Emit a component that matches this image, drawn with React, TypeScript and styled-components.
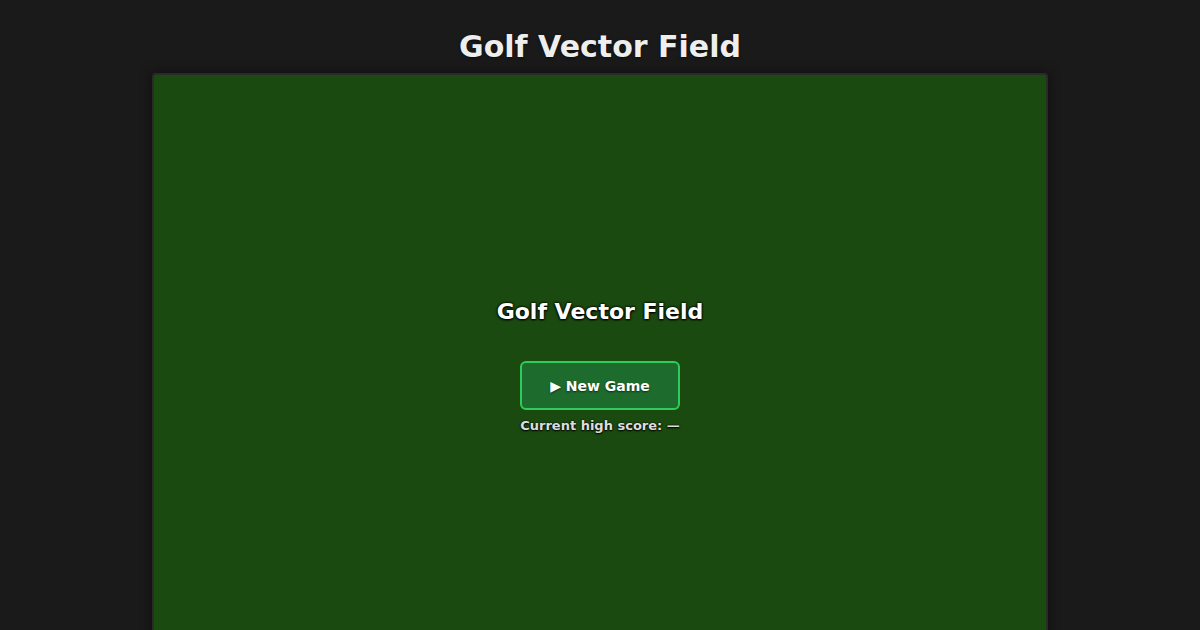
import React from 'react';
import styled, { createGlobalStyle } from 'styled-components';

const GlobalStyle = createGlobalStyle`
	html, body {
		margin: 0;
		padding: 0;
		background: #1a1a1a;
		font-family: "DejaVu Sans", sans-serif;
		color: #eee;
	}
`;

function App() {
	const [highScore] = React.useState<number | null>(null);

	return (
		<Page>
			<GlobalStyle />
			<Title>Golf Vector Field</Title>
			<Field>
				<Overlay>
					<OverlayTitle>Golf Vector Field</OverlayTitle>
					<StartBtn type="button">▶ New Game</StartBtn>
					<HighScore>Current high score: {highScore ?? '—'}</HighScore>
				</Overlay>
			</Field>
		</Page>
	);
}

const Page = styled.div`
	display: flex;
	flex-direction: column;
	align-items: center;
	padding-top: 29px;
`;

const Title = styled.h1`
	margin: 0 0 8px;
	font-size: 30px;
	line-height: 36px;
	font-weight: bold;
	color: #eee;
	text-shadow: 0 1px 3px rgba(0, 0, 0, 0.6);
`;

const Field = styled.div`
	width: 892px;
	height: 600px;
	background: #1b4a10;
	border: 2px solid #2a2a2a;
	border-radius: 4px;
	box-shadow: 0 0 12px rgba(0, 0, 0, 0.5);
	display: flex;
	align-items: center;
	justify-content: center;
`;

const Overlay = styled.div`
	display: flex;
	flex-direction: column;
	align-items: center;
	margin-top: -19px;
`;

const OverlayTitle = styled.h2`
	margin: 0 0 35px;
	font-size: 22px;
	line-height: 28px;
	font-weight: bold;
	color: #fff;
	text-shadow: 0 0 2px #000, 0 0 3px #000, 0 1px 2px #000;
`;

const StartBtn = styled.button`
	width: 160px;
	height: 49px;
	background: #1e6b2e;
	border: 2px solid #2ecc5a;
	border-radius: 6px;
	color: #fff;
	font-family: "DejaVu Sans", sans-serif;
	font-size: 14px;
	font-weight: bold;
	cursor: pointer;
	text-shadow: 0 1px 2px rgba(0, 0, 0, 0.6);
`;

const HighScore = styled.div`
	margin-top: 8px;
	font-size: 13px;
	font-weight: bold;
	color: #ddd;
	text-shadow: 0 0 2px #000, 0 1px 2px #000;
`;

export default App;
